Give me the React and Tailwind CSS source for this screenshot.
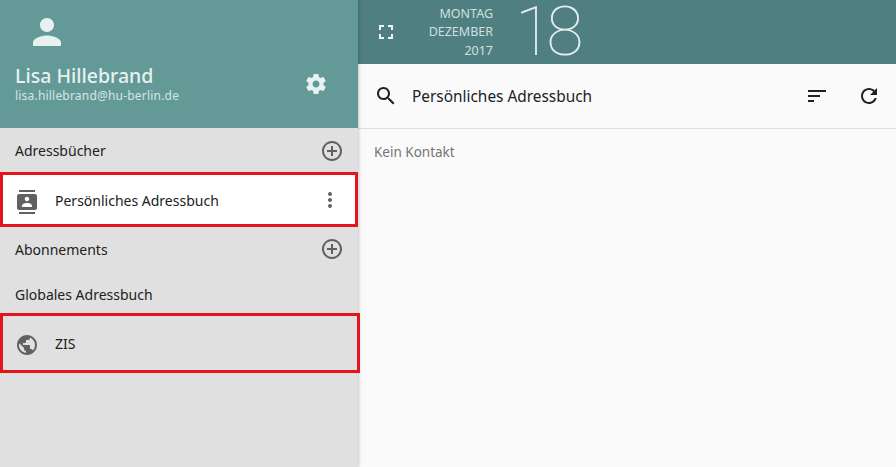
const Icon = ({ d, size = 24, className = "" }) => (
  <svg viewBox="0 0 24 24" width={size} height={size} fill="currentColor" className={className}>
    <path d={d} />
  </svg>
)

const icons = {
  person: "M12 12c2.21 0 4-1.79 4-4s-1.79-4-4-4-4 1.79-4 4 1.79 4 4 4zm0 2c-2.67 0-8 1.34-8 4v2h16v-2c0-2.66-5.33-4-8-4z",
  settings: "M19.43 12.98c.04-.32.07-.64.07-.98s-.03-.66-.07-.98l2.11-1.65c.19-.15.24-.42.12-.64l-2-3.46c-.12-.22-.39-.3-.61-.22l-2.49 1c-.52-.4-1.08-.73-1.69-.98l-.38-2.65C14.46 2.18 14.25 2 14 2h-4c-.25 0-.46.18-.49.42l-.38 2.65c-.61.25-1.17.59-1.69.98l-2.49-1c-.23-.09-.49 0-.61.22l-2 3.46c-.13.22-.07.49.12.64l2.11 1.65c-.04.32-.07.65-.07.98s.03.66.07.98l-2.11 1.65c-.19.15-.24.42-.12.64l2 3.46c.12.22.39.3.61.22l2.49-1c.52.4 1.08.73 1.69.98l.38 2.65c.03.24.24.42.49.42h4c.25 0 .46-.18.49-.42l.38-2.65c.61-.25 1.17-.59 1.69-.98l2.49 1c.23.09.49 0 .61-.22l2-3.46c.12-.22.07-.49-.12-.64l-2.11-1.65zM12 15.5c-1.93 0-3.5-1.57-3.5-3.5s1.57-3.5 3.5-3.5 3.5 1.57 3.5 3.5-1.57 3.5-3.5 3.5z",
  fullscreen: "M7 14H5v5h5v-2H7v-3zm-2-4h2V7h3V5H5v5zm12 7h-3v2h5v-5h-2v3zM14 5v2h3v3h2V5h-5z",
  search: "M15.5 14h-.79l-.28-.27C15.41 12.59 16 11.11 16 9.5 16 5.91 13.09 3 9.5 3S3 5.91 3 9.5 5.91 16 9.5 16c1.61 0 3.09-.59 4.23-1.57l.27.28v.79l5 4.99L20.49 19l-4.99-5zm-6 0C7.01 14 5 11.99 5 9.5S7.01 5 9.5 5 14 7.01 14 9.5 11.99 14 9.5 14z",
  sort: "M3 18h6v-2H3v2zM3 6v2h18V6H3zm0 7h12v-2H3v2z",
  refresh: "M17.65 6.35C16.2 4.9 14.21 4 12 4c-4.42 0-7.99 3.58-7.99 8s3.57 8 7.99 8c3.73 0 6.84-2.55 7.73-6h-2.08c-.82 2.33-3.04 4-5.65 4-3.31 0-6-2.69-6-6s2.69-6 6-6c1.66 0 3.14.69 4.22 1.78L13 11h7V4l-2.35 2.35z",
  add: "M13 7h-2v4H7v2h4v4h2v-4h4v-2h-4V7zm-1-5C6.48 2 2 6.48 2 12s4.48 10 10 10 10-4.48 10-10S17.52 2 12 2zm0 18c-4.41 0-8-3.59-8-8s3.59-8 8-8 8 3.59 8 8-3.59 8-8 8z",
  more: "M12 8c1.1 0 2-.9 2-2s-.9-2-2-2-2 .9-2 2 .9 2 2 2zm0 2c-1.1 0-2 .9-2 2s.9 2 2 2 2-.9 2-2-.9-2-2-2zm0 6c-1.1 0-2 .9-2 2s.9 2 2 2 2-.9 2-2-.9-2-2-2z",
  contacts: "M20 0H4v2h16V0zM4 24h16v-2H4v2zM20 4H4c-1.1 0-2 .9-2 2v12c0 1.1.9 2 2 2h16c1.1 0 2-.9 2-2V6c0-1.1-.9-2-2-2zm-8 2.75c1.24 0 2.25 1.01 2.25 2.25s-1.01 2.25-2.25 2.25S9.75 10.24 9.75 9 10.76 6.75 12 6.75zM17 17H7v-1.5c0-1.67 3.33-2.5 5-2.5s5 .83 5 2.5V17z",
  globe: "M12 2C6.48 2 2 6.48 2 12s4.48 10 10 10 10-4.48 10-10S17.52 2 12 2zm-1 17.93c-3.95-.49-7-3.85-7-7.93 0-.62.08-1.21.21-1.79L9 15v1c0 1.1.9 2 2 2v1.93zm6.9-2.54c-.26-.81-1-1.39-1.9-1.39h-1v-3c0-.55-.45-1-1-1H8v-2h2c.55 0 1-.45 1-1V7h2c1.1 0 2-.9 2-2v-.41c2.93 1.19 5 4.06 5 7.41 0 2.08-.8 3.97-2.1 5.39z",
}

const SectionRow = ({ title, action, className = "" }) => (
  <div className={`flex items-center justify-between pl-[15px] pr-[14px] text-[14px] text-[#212121] ${className}`}>
    <span>{title}</span>
    {action && <Icon d={icons.add} className="text-[#616161]" />}
  </div>
)

export default function App() {
  return (
    <div className="flex h-[467px] w-[896px] overflow-hidden bg-[#fafafa] font-['Noto_Sans',sans-serif]">
      <aside className="z-10 flex w-[358px] shrink-0 flex-col bg-[#e0e0e0] shadow-[1px_0_3px_rgba(0,0,0,0.2)]">
        <div className="flex h-[128px] items-end justify-between bg-[#639a97] pb-[24px] pl-[15px] pr-[30px] text-[#e8f1f0]">
          <div className="flex flex-col">
            <Icon d={icons.person} size={42} className="mb-[11px] ml-[11px]" />
            <div className="text-[19.5px] font-medium leading-[24px]">Lisa Hillebrand</div>
            <div className="text-[12px] leading-[16px] tracking-[0.2px] text-[#d5e5e3]">lisa.hillebrand@hu-berlin.de</div>
          </div>
          <Icon d={icons.settings} className="mb-[8px]" />
        </div>

        <SectionRow title="Adressbücher" action className="h-[44px] pt-[1px]" />
        <div className="relative flex h-[55px] items-center bg-white pl-[15px] pr-[16px] pt-[1px] text-[14px] text-[#212121]">
          <Icon d={icons.contacts} className="mt-[3px] text-[#616161]" />
          <span className="ml-[16px] flex-1">Persönliches Adressbuch</span>
          <Icon d={icons.more} className="text-[#616161]" />
          <div className="absolute inset-0 border-[3px] border-[#e2141c]" />
        </div>
        <SectionRow title="Abonnements" action className="h-[44px]" />
        <SectionRow title="Globales Adressbuch" className="h-[42px] pt-[5px]" />
        <div className="relative flex h-[60px] items-center pl-[15px] pt-[1px] text-[14px] text-[#212121]">
          <Icon d={icons.globe} className="mt-[3px] text-[#616161]" />
          <span className="ml-[16px]">ZIS</span>
          <div className="absolute inset-y-0 left-0 right-[-2px] border-[3px] border-[#e2141c]" />
        </div>
      </aside>

      <main className="flex flex-1 flex-col">
        <div className="flex h-[64px] items-center bg-[#4f7f80] pl-[16px]">
          <Icon d={icons.fullscreen} className="text-[#f1f6f6]" />
          <div className="ml-[1px] flex w-[94px] flex-col items-end pt-[1px] text-[12.5px] leading-[18.5px] text-[#cfe0df]">
            <span>MONTAG</span>
            <span>DEZEMBER</span>
            <span>2017</span>
          </div>
          <span className="ml-[22px] font-['Roboto',sans-serif] text-[68px] font-thin leading-[64px] tracking-[-6px] text-[#e4eeee]">18</span>
        </div>
        <div className="flex h-[65px] items-center border-b border-[#e0e0e0] pl-[16px] pr-[15px] text-[#212121]">
          <Icon d={icons.search} />
          <span className="ml-[14px] flex-1 pt-[1px] text-[15.4px]">Persönliches Adressbuch</span>
          <Icon d={icons.sort} className="mr-[28px]" />
          <Icon d={icons.refresh} />
        </div>
        <div className="pl-[16px] pt-[13px] text-[13.5px] leading-[20px] text-[#757575]">Kein Kontakt</div>
      </main>
    </div>
  )
}
